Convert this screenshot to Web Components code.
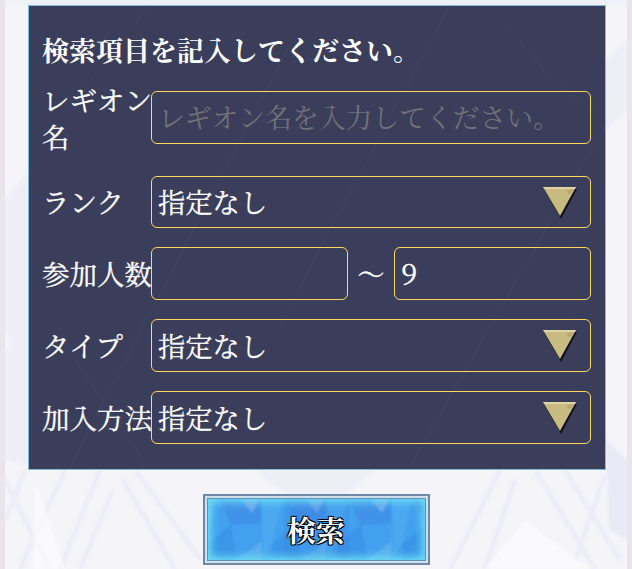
<!DOCTYPE html>
<html lang="ja">
<head>
<meta charset="utf-8">
<title>レギオン検索</title>
<style>
  html, body { margin: 0; padding: 0; background: #e9e5ec; }
  body { font-family: "Noto Serif CJK JP", "Noto Sans CJK JP", serif; }
</style>
</head>
<body>

<template id="search-page-tpl">
  <style>
    :host { display: block; width: 622px; height: 569px; margin-left: 5px; position: relative; overflow: hidden; background: #f4f4f9; }
    .bg { position: absolute; inset: 0; width: 100%; height: 100%; }
    .content { position: relative; display: flex; flex-direction: column; align-items: center; padding-top: 5px; }
    .foot { margin-top: 24px; }
  </style>
  <svg class="bg" viewBox="0 0 622 569" aria-hidden="true">
    <defs><filter id="soft"><feGaussianBlur stdDeviation="1.8"/></filter></defs>
    <rect width="622" height="5" fill="#f0f0f7"/>
    <g filter="url(#soft)" fill="none" stroke="#e9e9f4" stroke-width="4.5" opacity=".75">
      <path d="M0 480 L45 569"/>
      <path d="M20 470 L0 520"/>
      <path d="M60 470 L15 569"/>
      <path d="M95 470 L55 569"/>
      <path d="M118 480 L170 569"/>
      <path d="M108 490 L75 569"/>
      <path d="M130 470 L196 560"/>
      <path d="M495 470 L445 569"/>
      <path d="M510 480 L480 569"/>
      <path d="M530 470 L590 569"/>
      <path d="M560 470 L615 560"/>
      <path d="M600 475 L570 560"/>
    </g>
    <g filter="url(#soft)" fill="#eeeef7">
      <path d="M0 200 L24 170 L24 340 L8 350 L0 330Z"/>
      <path d="M0 350 L24 330 L24 465 L0 460Z"/>
      <path d="M601 440 L622 460 L622 540 L604 530Z" fill="#e9e9f5"/>
      <path d="M601 60 L622 40 L622 110 L601 130Z"/>
      <path d="M250 470 L370 470 L340 495 L280 495Z"/>
    </g>
    <g filter="url(#soft)" fill="#ffffff" opacity=".6">
      <path d="M30 480 L60 569 L28 569Z"/>
      <path d="M480 569 L520 520 L585 569Z"/>
    </g>
  </svg>
  <div class="content">
    <slot></slot>
    <div class="foot"><slot name="action"></slot></div>
  </div>
</template>

<template id="search-panel-tpl">
  <style>
    :host { display: block; box-sizing: border-box; width: 578px; height: 465px; margin-left: 2px; padding: 29px 14px 0 13px; color: #fff;
      position: relative; background: #3b3e5a; border: 1px solid #82bbe0; -webkit-text-stroke: .3px #fff; }
    h2 { margin: 0 0 15.5px; font-size: 27px; line-height: 30px; font-weight: 700; white-space: nowrap; -webkit-text-stroke: 0; }
    .rows { display: flex; flex-direction: column; gap: 19px; }
    .tex { position: absolute; inset: 0; width: 100%; height: 100%; }
    h2, .rows { position: relative; }
  </style>
  <svg class="tex" viewBox="0 0 576 463" aria-hidden="true">
    <g fill="none" stroke="#434662" stroke-width="1.4" opacity=".4">
      <path d="M120 0 L0 150"/><path d="M260 40 L40 463"/><path d="M420 0 L250 320"/>
      <path d="M576 120 L380 463"/><path d="M30 330 L120 463"/><path d="M480 20 Q530 90 576 110"/>
    </g>
  </svg>
  <h2><slot name="title"></slot></h2>
  <div class="rows"><slot></slot></div>
</template>

<template id="form-row-tpl">
  <style>
    :host { display: flex; align-items: center; font-size: 27.5px; }
    .label { flex: 0 0 109px; width: 109px; line-height: 37px; white-space: nowrap; }
    .field { flex: 1; display: flex; align-items: center; }
    :host([tall]) { margin-bottom: 2.1px; }
  </style>
  <div class="label"><slot name="label"></slot></div>
  <div class="field"><slot></slot></div>
</template>

<template id="text-field-tpl">
  <style>
    :host { display: block; flex: 1; box-sizing: border-box; height: 52.75px; border: 1px solid #ffd75a; border-radius: 6px;
      padding: 0 6px; font-size: 27px; line-height: 50px; color: #fff; overflow: hidden; white-space: nowrap; }
    :host([placeholder]) { color: #717277; font-size: 26.8px; -webkit-text-stroke: 0; }
  </style>
  <slot></slot>
</template>

<template id="select-field-tpl">
  <style>
    :host { display: flex; flex: 1; align-items: center; justify-content: space-between; box-sizing: border-box; height: 52.75px;
      border: 1px solid #ffd75a; border-radius: 6px; padding: 0 12px 0 6px; font-size: 27.3px; color: #fff; }
    svg { width: 36px; height: 34px; display: block; }
  </style>
  <span><slot></slot></span>
  <svg viewBox="0 0 36 34" aria-hidden="true">
    <path d="M2 4 L35 4 L19 34Z" fill="#0b0b12" opacity=".9"/>
    <path d="M1 2 L34 2 L18 31Z" fill="#c8bb82"/>
    <path d="M1 2 L34 2 L33 4 L3 4Z" fill="#ddd3a4"/>
    <path d="M24 6 L31 4 L28 10Z" fill="#b5a873"/>
  </svg>
</template>

<template id="gem-button-tpl">
  <style>
    :host { display: block; box-sizing: border-box; width: 227px; height: 71px; position: relative; border: 2px solid #6e88a8;
      background: #cfe0ea; padding: 2px; -webkit-text-stroke: 0; }
    .face { position: relative; width: 100%; height: 100%; box-sizing: border-box; overflow: hidden; background: #3f9fee; border: 1px solid #5b93bd; }
    svg { position: absolute; inset: 0; width: 100%; height: 100%; display: block; }
    .glow { position: absolute; inset: 0; box-shadow: inset 0 0 9px 3px #6fe0f5; }
    .label { position: absolute; inset: 0; display: flex; align-items: center; justify-content: center;
      font-size: 29px; font-weight: 700; color: #fff;
      text-shadow: -1px -1px 0 #000, 1px -1px 0 #000, -1px 1px 0 #000, 1px 1px 0 #000; }
  </style>
  <div class="face">
    <svg viewBox="0 0 217 61" preserveAspectRatio="none" aria-hidden="true">
      <defs>
        <filter id="tile-soft"><feGaussianBlur stdDeviation="1"/></filter>
        <g id="tile" filter="url(#tile-soft)">
          <rect width="65" height="61" fill="#42a0ef"/>
          <path d="M0 0 L20 0 L10 45 L0 61Z" fill="#4ca8f1"/>
          <path d="M22 0 L65 0 L65 24 L34 26Z" fill="#3f92e8"/>
          <path d="M44 0 L62 0 L55 14Z" fill="#6ea8ec"/>
          <path d="M10 45 L34 26 L40 61 L10 61Z" fill="#3a95e8"/>
          <path d="M40 61 L65 42 L65 61Z" fill="#5aaeef"/>
        </g>
      </defs>
      <use href="#tile" x="-11"/>
      <use href="#tile" x="54"/>
      <use href="#tile" x="119"/>
      <use href="#tile" x="184"/>
      <rect x="76" y="0" width="65" height="61" fill="#2f6fd8" opacity=".14"/>
    </svg>
    <div class="glow"></div>
    <div class="label"><slot></slot></div>
  </div>
</template>

<search-page>
  <search-panel>
    <span slot="title">検索項目を記入してください。</span>
    <form-row tall>
      <span slot="label">レギオン<br>名</span>
      <text-field placeholder>レギオン名を入力してください。</text-field>
    </form-row>
    <form-row>
      <span slot="label">ランク</span>
      <select-field>指定なし</select-field>
    </form-row>
    <form-row>
      <span slot="label">参加人数</span>
      <range-field><span slot="from"></span><span slot="to">9</span></range-field>
    </form-row>
    <form-row>
      <span slot="label">タイプ</span>
      <select-field>指定なし</select-field>
    </form-row>
    <form-row>
      <span slot="label">加入方法</span>
      <select-field>指定なし</select-field>
    </form-row>
  </search-panel>
  <gem-button slot="action">検索</gem-button>
</search-page>

<template id="range-field-tpl">
  <style>
    :host { display: flex; flex: 1; align-items: center; }
    text-field { flex: 0 0 197px; }
    ::slotted([slot="to"]) { font-size: 29px; }
    .sep { flex: 1; text-align: center; font-size: 27px; }
  </style>
  <text-field><slot name="from"></slot></text-field>
  <span class="sep">～</span>
  <text-field><slot name="to"></slot></text-field>
</template>

<script>
  // each element just clones its template into an open shadow root
  function defineFromTemplate(tag, tplId) {
    customElements.define(tag, class extends HTMLElement {
      constructor() {
        super();
        const root = this.attachShadow({ mode: "open" });
        root.appendChild(document.getElementById(tplId).content.cloneNode(true));
      }
    });
  }

  defineFromTemplate("text-field", "text-field-tpl");
  defineFromTemplate("select-field", "select-field-tpl");
  defineFromTemplate("range-field", "range-field-tpl");
  defineFromTemplate("form-row", "form-row-tpl");
  defineFromTemplate("search-panel", "search-panel-tpl");
  defineFromTemplate("gem-button", "gem-button-tpl");
  defineFromTemplate("search-page", "search-page-tpl");
</script>
</body>
</html>
